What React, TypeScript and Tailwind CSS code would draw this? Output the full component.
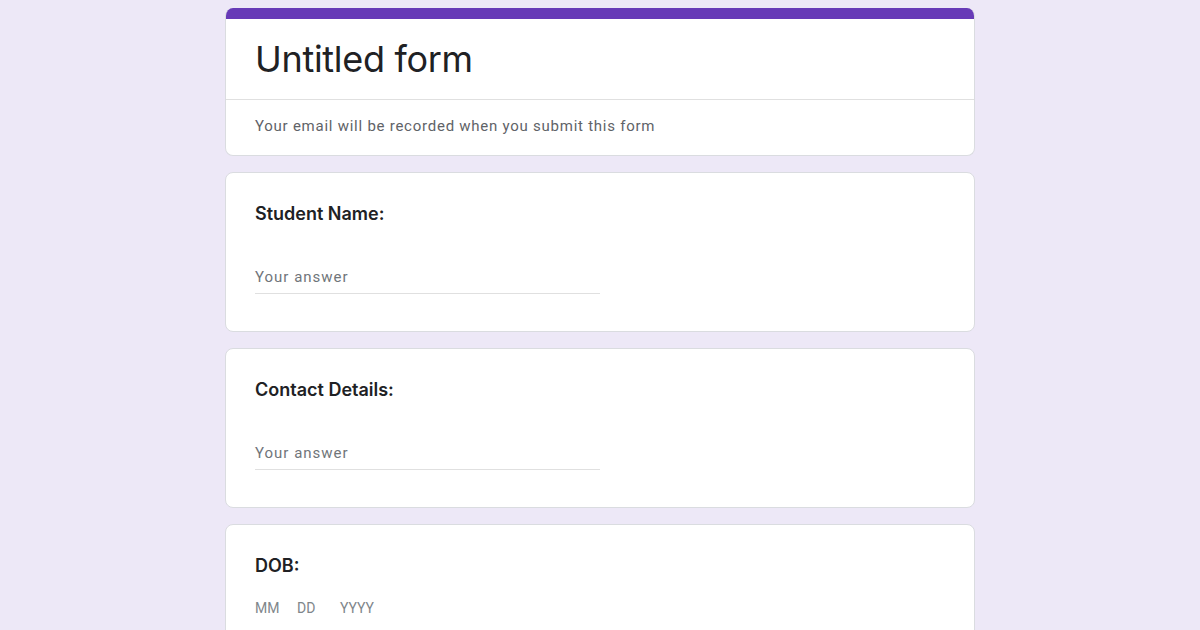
export default function App() {
  const questions = ['Student Name:', 'Contact Details:']

  return (
    <div className="min-h-screen bg-[#ede8f7] flex justify-center pt-[8px]" style={{ fontFamily: 'Roboto, "Liberation Sans", sans-serif' }}>
      <div className="w-[750px] flex flex-col gap-[16px]">
        {/* header card */}
        <div className="rounded-[8px] bg-white border border-[#dadce0] border-t-0 overflow-hidden">
          <div className="h-[11px] bg-[#673ab7]" />
          <div className="h-[81px] px-[29px] flex items-center border-b border-[#e0e0e0]">
            <h1 className="text-[36px] leading-[44px] text-[#202124] font-['Inter',sans-serif] tracking-[-0.3px]">Untitled form</h1>
          </div>
          <div className="h-[55px] px-[29px] pb-[2px] flex items-center">
            <p className="text-[15px] tracking-[0.75px] text-[#5f6368]">Your email will be recorded when you submit this form</p>
          </div>
        </div>

        {questions.map((q) => (
          <div key={q} className="rounded-[8px] bg-white border border-[#dadce0] px-[29px] pt-[31px] pb-[37px]">
            <div className="text-[18px] leading-[20px] font-semibold text-[#202124] font-['Inter',sans-serif]">{q}</div>
            <div className="mt-[41px] w-[345px] border-b border-[#e0e0e0] pb-[4px]">
              <span className="text-[15px] leading-[24px] tracking-[1px] text-[#70757a]">Your answer</span>
            </div>
          </div>
        ))}

        <div className="rounded-[8px] bg-white border border-[#dadce0] px-[29px] pt-[31px] pb-[40px]">
          <div className="text-[18px] leading-[20px] font-semibold text-[#202124] font-['Inter',sans-serif]">DOB:</div>
          <div className="mt-[22px] flex text-[14px] leading-[20px] text-[#80868b]">
            <span className="w-[42px]">MM</span>
            <span className="w-[43px]">DD</span>
            <span>YYYY</span>
          </div>
          <div className="h-[40px]" />
        </div>
      </div>
    </div>
  )
}
